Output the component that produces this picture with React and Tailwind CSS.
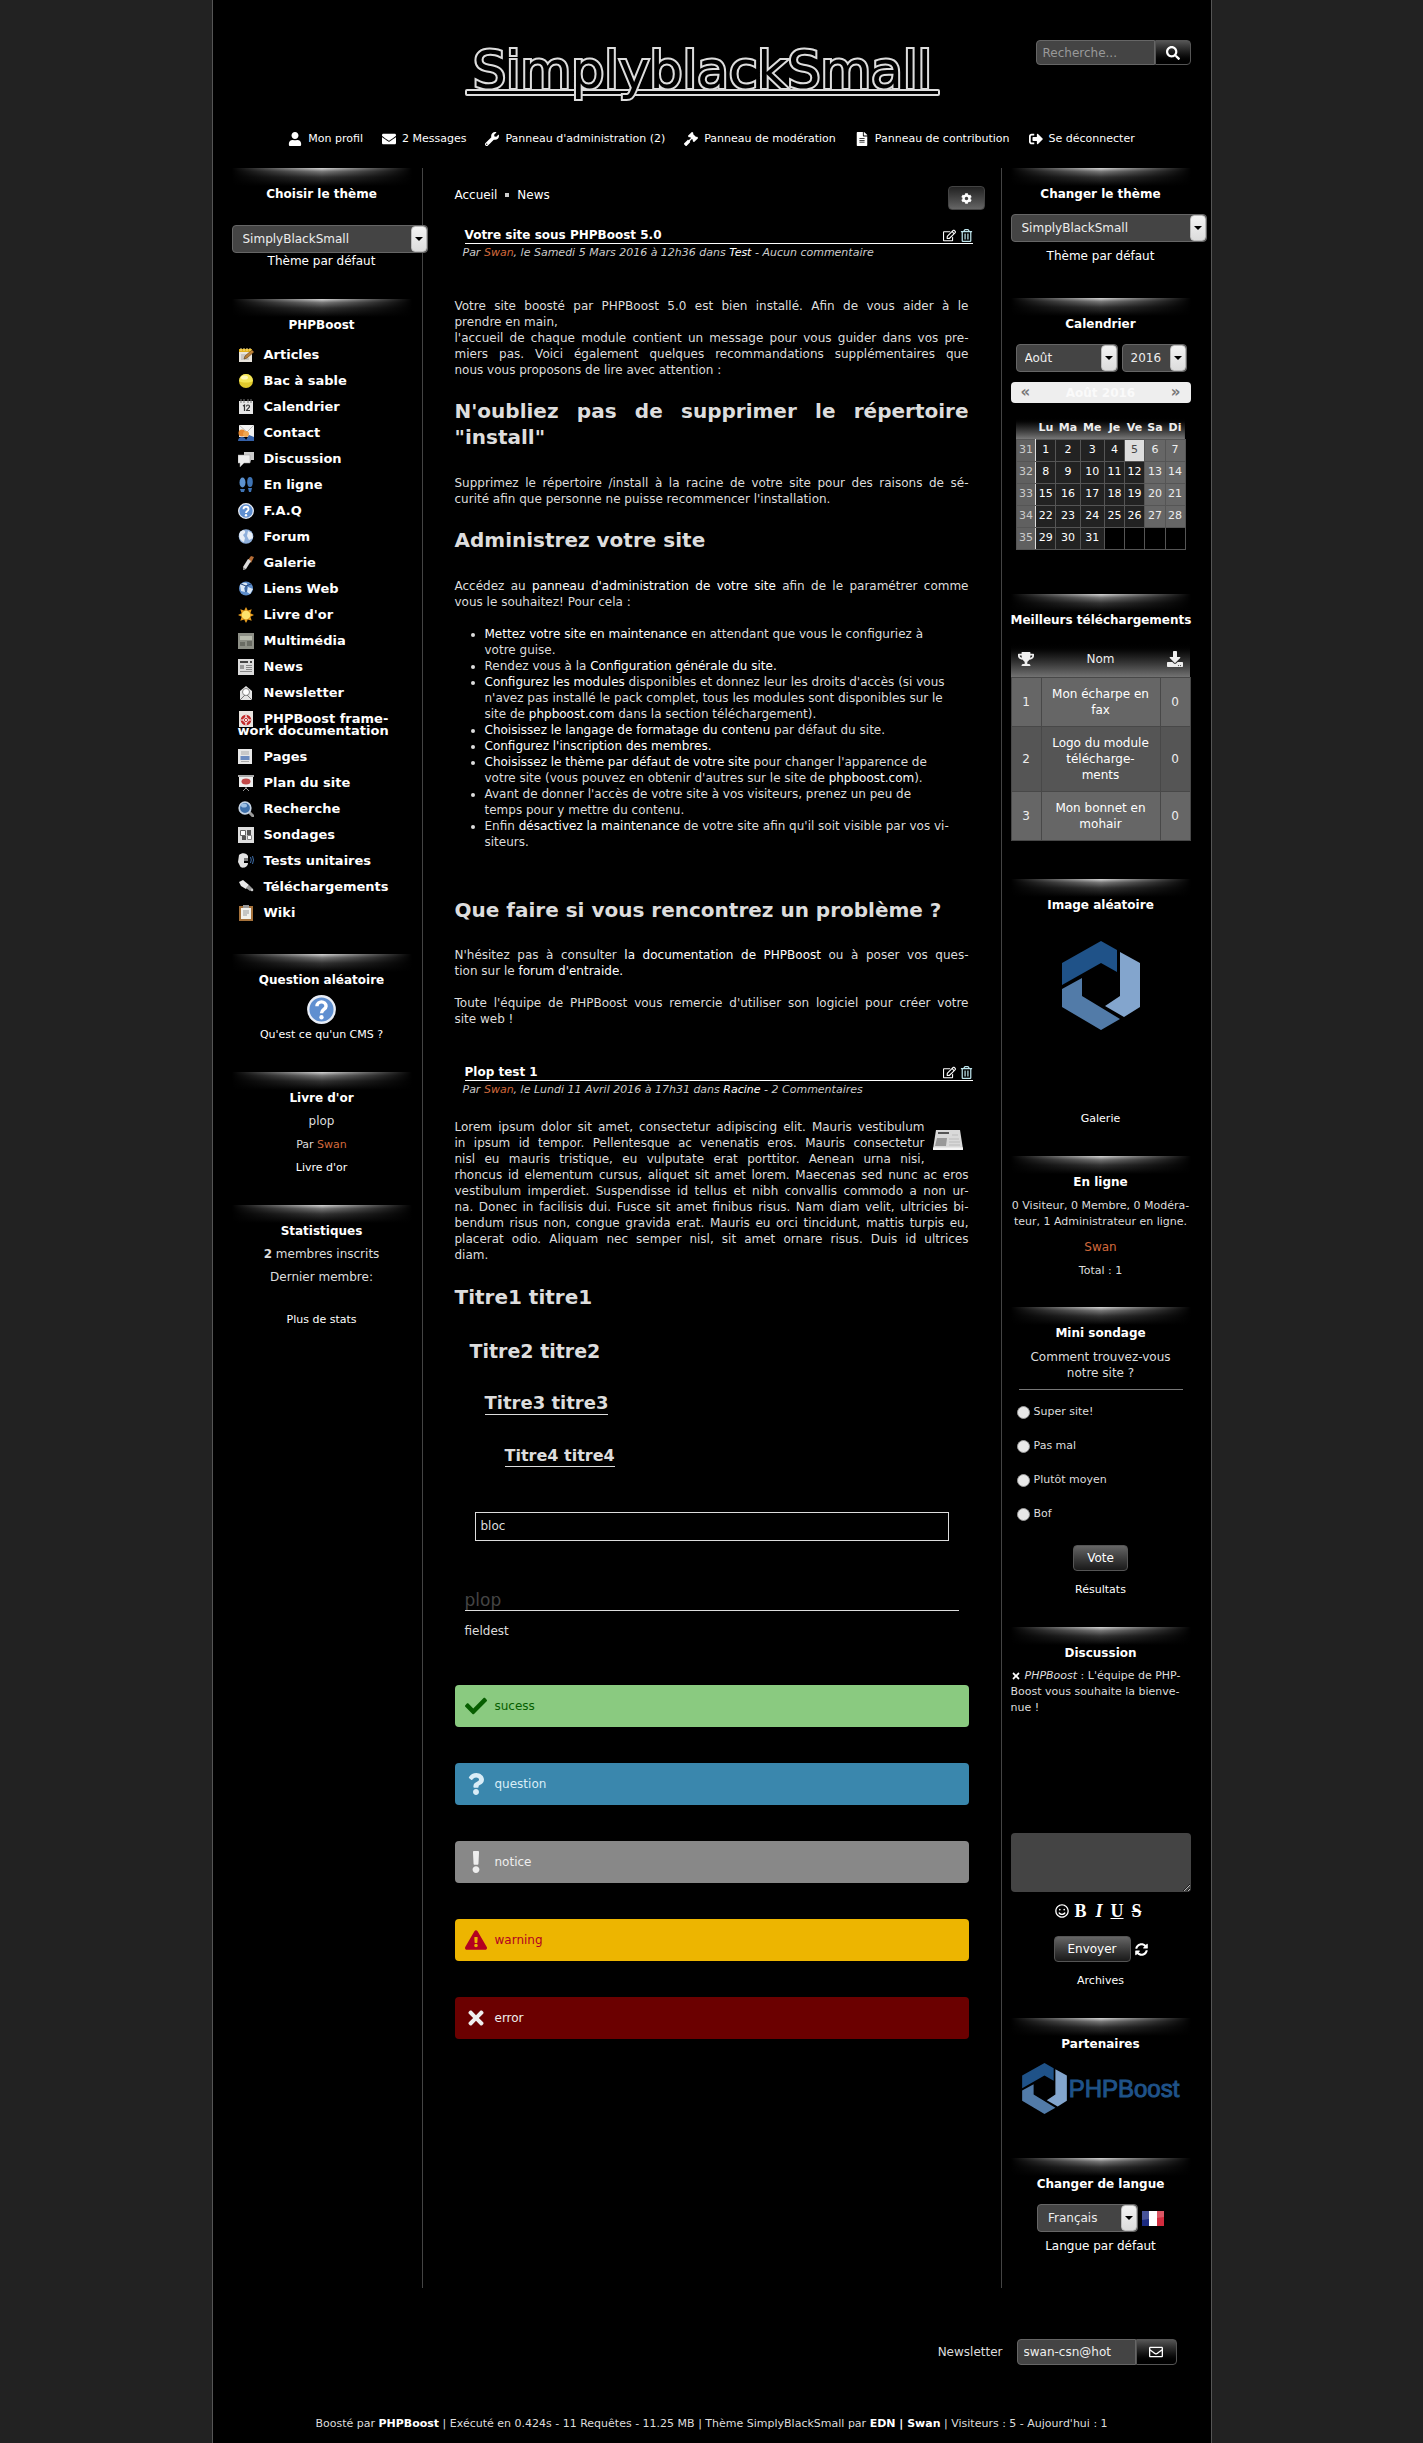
import React from "react";
import {
  FaUser, FaEnvelope, FaWrench, FaGavel, FaFileAlt, FaSignOutAlt, FaSearch, FaCog,
  FaRegEdit, FaRegTrashAlt, FaTrophy, FaDownload, FaCheck, FaQuestion, FaExclamation,
  FaExclamationTriangle, FaTimes, FaSyncAlt, FaRegSmile, FaRegEnvelope,
} from "react-icons/fa";

const A = ({ className = "text-white", children }) => (
  <a href="#" className={className}>{children}</a>
);

/* Justified paragraph whose line ends are chosen by the author. */
function Lines({ className = "", lines }) {
  return (
    <p className={className}>
      {lines.map((l, i) => (
        <span key={i} className={i < lines.length - 1 ? "block [text-align-last:justify]" : "block"}>{l}</span>
      ))}
    </p>
  );
}

/* ---------- sidebar block ---------- */
function Block({ title, className = "", children }) {
  return (
    <section className={"relative w-[180px] pt-[18px] " + className}>
      <div className="absolute inset-x-0 top-0 h-[18px] bg-[linear-gradient(to_right,#000,transparent_50%,#000),linear-gradient(to_bottom,#d8d8d8,#777_20%,#333_50%,#000)]" />
      <h2 className="relative text-center text-[12px] leading-4 font-bold text-white whitespace-nowrap">{title}</h2>
      {children}
    </section>
  );
}

function Select({ label, options, className, pad = "pl-2.5" }) {
  return (
    <span className={"relative inline-block h-7 " + className}>
      <select
        aria-label={label}
        className={"h-full w-full appearance-none rounded border border-[#666] bg-[#444] pr-4 text-[12px] text-[#eee] " + pad}
      >
        {options.map((o) => <option key={o}>{o}</option>)}
      </select>
      <span className="pointer-events-none absolute inset-y-px right-px flex w-4 items-center justify-center rounded-sm border border-[#bbb] bg-linear-to-b from-[#f4f4f4] to-[#dcdcdc]">
        <svg width="8" height="4" viewBox="0 0 8 4"><path d="M0 0h8L4 4z" fill="#000" /></svg>
      </span>
    </span>
  );
}

/* ---------- module icons ---------- */
const icons = {
  articles: (
    <g><path d="M1 2h13v13H1z" fill="#e8e4dc" /><path d="M1 2h13v3H1z" fill="#e3b21c" /><path d="M3 1v3M6 1v3M9 1v3M12 1v3" stroke="#fbe28a" /><path d="M3 8h6M3 10h5M3 12h8" stroke="#aaa" /><path d="M6 12l1-3 7-6 2 2-7 6z" fill="#b9803a" stroke="#5c3a12" strokeWidth=".6" /></g>
  ),
  sable: (
    <g><circle cx="8" cy="8" r="7" fill="#e0c92c" /><path d="M1 8a7 7 0 0 1 14 0c-3 2-11 2-14 0z" fill="#f3e658" /><ellipse cx="6.500" cy="4.500" rx="3.500" ry="2" fill="#fdf8b8" /></g>
  ),
  calendrier: (
    <g><path d="M1 2h14v13H1z" fill="#e6e6e6" /><path d="M3 0v4M6 0v4M10 0v4M13 0v4" stroke="#777" /><path d="M5 7l1.500-1v6M8.500 7.500c0-2 3-2 3 0 0 1.500-3 3-3 4h3.500" fill="none" stroke="#333" strokeWidth="1.200" /></g>
  ),
  contact: (
    <g><path d="M1 0h15v12H1z" fill="#f2f2f2" /><path d="M1 0l8 7 7-7" fill="none" stroke="#bbb" /><circle cx="4" cy="8" r="3.500" fill="#e6872e" /><circle cx="8" cy="9" r="3" fill="#f0a650" /><path d="M0 16c0-5 7-5 8-1l3-5 5 2v4z" fill="#3561a8" /></g>
  ),
  discussion: (
    <g><path d="M6 1h10v8h-3l-1 3V9H6z" fill="#ccc" /><path d="M0 4h12v8H6l-4 4v-4H0z" fill="#ededed" stroke="#999" strokeWidth=".5" /></g>
  ),
  ligne: (
    <g fill="#3f74b5"><ellipse cx="4.500" cy="5.500" rx="3" ry="5" fill="#5d92cf" /><path d="M2 12h5l-1 3H3z" /><ellipse cx="12" cy="5" rx="2.800" ry="5" /><path d="M10 11h4l-1 4h-2z" /></g>
  ),
  faq: (
    <g><circle cx="8" cy="8" r="7.300" fill="#5f8fd0" stroke="#e9eef7" strokeWidth="1.300" /><path d="M5.500 6.200c0-3.200 5-3.200 5 0C10.500 8 8 8 8 10" fill="none" stroke="#fff" strokeWidth="1.900" /><circle cx="8" cy="12.300" r="1.200" fill="#fff" /></g>
  ),
  forum: (
    <g><circle cx="8" cy="7.500" r="7.300" fill="#8fb0dc" /><path d="M2 3c3-3 6-2 5 1l-2 2 2 3-1 4C2 12 0 7 2 3zM10 2l4 2 1 5-4 2-2-4z" fill="#e8eef6" /></g>
  ),
  galerie: (
    <g><path d="M10 5l3-4 3 1-3 6z" fill="#b66d36" /><path d="M5 12l5-8 3 2-5 8-3 1z" fill="#ddd" /><path d="M5 12l3 2-3 1z" fill="#888" /></g>
  ),
  web: (
    <g><circle cx="8" cy="7.500" r="7" fill="#5c8cc9" /><path d="M2 4c3-3 8-3 7 0L6 7l1 4-4-1zM10 6l5 2-3 5-3-2z" fill="#dbe8f6" /><path d="M3 3l5 2 5-2M8 5v6" stroke="#1f4277" fill="none" /></g>
  ),
  livre: (
    <g><path d="M8 0l1.800 3.600L13.700 2.300l-1.300 3.900L16 8l-3.600 1.800 1.300 3.900-3.900-1.300L8 16l-1.800-3.600-3.900 1.300 1.300-3.900L0 8l3.600-1.800L2.300 2.300l3.900 1.300z" fill="#e89e1e" /><circle cx="8" cy="8" r="4.300" fill="#ffe36b" /></g>
  ),
  media: (
    <g><path d="M0 0h16v16H0z" fill="#8d8f86" /><path d="M2 3h12v4H2z" fill="#b9bcae" /><path d="M2 9h5v4H2zM9 8h5v5H9z" fill="#6a6c64" /></g>
  ),
  news: (
    <g><path d="M0 0h16v16H0z" fill="#dcdcdc" /><path d="M2 3h8M12 3h2" stroke="#444" strokeWidth="2" /><path d="M2 6h4v4H2z" fill="#999" /><path d="M8 6.500h6M8 8.500h6M8 10.500h6M2 12.500h12" stroke="#888" /></g>
  ),
  newsletter: (
    <g><path d="M2 6l6-5 6 5v9H2z" fill="#e4e4e4" /><circle cx="8" cy="7" r="3.500" fill="#fff" stroke="#888" /><path d="M2 15l5-5M14 15l-5-5" stroke="#777" /></g>
  ),
  doc: (
    <g><path d="M1 0h14v16H1z" fill="#e9e4e0" /><circle cx="8" cy="9" r="4" fill="none" stroke="#c22a2a" strokeWidth="2.600" /><path d="M8 4v10M3 9h10" stroke="#fff" strokeWidth="1.200" /><circle cx="8" cy="9" r="1.600" fill="#fff" stroke="#c22a2a" /></g>
  ),
  pages: (
    <g><path d="M0 0h14v15H0z" fill="#e8e8e8" /><path d="M3 3h8M3 5h8M3 12.500h8" stroke="#aaa" /><path d="M2.500 7h9v4h-9z" fill="#6d8cc0" /></g>
  ),
  plan: (
    <g><path d="M1 1h14v11H1z" fill="#eee" /><path d="M0 0h16v2H0z" fill="#aaa" /><ellipse cx="8" cy="6.500" rx="4.500" ry="3" fill="#c04848" /><path d="M8 12v2M5 16l3-3 3 3" stroke="#999" fill="none" /></g>
  ),
  recherche: (
    <g><path d="M10 10l5 5" stroke="#999" strokeWidth="3" strokeLinecap="round" /><circle cx="7" cy="7" r="5.800" fill="#3d6fa9" stroke="#c4d3e4" strokeWidth="1.700" /><ellipse cx="6" cy="4.500" rx="3" ry="2" fill="#9cc0e5" /></g>
  ),
  sondages: (
    <g><path d="M0 0h16v16H0z" fill="#dedede" /><path d="M2.500 3.500h5v5h-5z" fill="#fff" stroke="#666" /><path d="M9 3h4v5H9zM4 9h4v4H4z" fill="#555" /><path d="M9.500 8.500h4v4h-4z" fill="#fff" stroke="#888" /></g>
  ),
  tests: (
    <g><path d="M1 2C4-1 9 0 10 3v2H6v5h4c0 5-7 6-8 3L0 9z" fill="#e2e2e2" /><path d="M6 5h4v3H6z" fill="#777" /><path d="M12.500 4q1.500 3 0 6M14.500 3q2 4 0 8" stroke="#3f6ea8" fill="none" /></g>
  ),
  tele: (
    <g><path d="M1 3l4-2 6 5-3 4-5-3z" fill="#e9e9e9" /><path d="M8 9l3-3 4 4-3 2z" fill="#999" /><circle cx="14" cy="11" r="1.300" fill="#ccc" /></g>
  ),
  wiki: (
    <g><path d="M1 1h14v15H1z" fill="#a5713a" /><path d="M3 3h10v11H3z" fill="#f2f1ec" /><path d="M5 0h6v3H5z" fill="#999" /><path d="M5 6h6M5 8h6M5 10h4" stroke="#999" /></g>
  ),
};

const Ico = ({ name }) => (
  <svg viewBox="0 0 16 16" className="-mt-1.5 -mb-1 mr-2.5 inline-block size-4 align-middle" aria-hidden="true">{icons[name]}</svg>
);

const modules = [
  ["articles", "Articles"], ["sable", "Bac à sable"], ["calendrier", "Calendrier"], ["contact", "Contact"],
  ["discussion", "Discussion"], ["ligne", "En ligne"], ["faq", "F.A.Q"], ["forum", "Forum"], ["galerie", "Galerie"],
  ["web", "Liens Web"], ["livre", "Livre d'or"], ["media", "Multimédia"], ["news", "News"], ["newsletter", "Newsletter"],
  ["doc", <>PHPBoost frame-<br />work documentation</>], ["pages", "Pages"], ["plan", "Plan du site"],
  ["recherche", "Recherche"], ["sondages", "Sondages"], ["tests", "Tests unitaires"], ["tele", "Téléchargements"], ["wiki", "Wiki"],
];

function Hexagon({ className }) {
  return (
    <svg viewBox="0 0 78 89" className={className} aria-label="PHPBoost" role="img">
      <path d="M0 22L39 0l16 9v22l-16-9L0 44z" fill="#1f5288" />
      <path d="M58 11l20 11v44l-16 10-19-11 15-10z" fill="#83a5cd" />
      <path d="M0 48l20-11v18l38 23-19 11L0 66z" fill="#527ba8" />
    </svg>
  );
}

function Left() {
  return (
    <aside className="w-[210px] shrink-0 border-r border-[#444] pl-[19px]">
      <Block title="Choisir le thème" className="mb-[30px]">
        <Select label="Choisir le thème" options={["SimplyBlackSmall"]} className="mt-[23px] block w-[196px]" />
        <p className="text-center text-[12px] leading-4"><A>Thème par défaut</A></p>
      </Block>
      <Block title="PHPBoost" className="mb-7">
        <nav className="mt-[9px]">
          <ul className="pl-1.5 text-[13px] font-bold whitespace-nowrap">
            {modules.map(([k, t]) => (
              <li key={k} className={k === "doc" ? "py-[7px] leading-3" : "py-[5px] leading-4"}><A><Ico name={k} />{t}</A></li>
            ))}
          </ul>
        </nav>
      </Block>
      <Block title="Question aléatoire" className="mb-[29px] text-center">
        <svg viewBox="0 0 16 16" className="mx-auto mt-[7px] size-[29px]" aria-hidden="true">{icons.faq}</svg>
        <p className="mt-[3px] text-[11px] leading-4"><A>Qu'est ce qu'un CMS ?</A></p>
      </Block>
      <Block title="Livre d'or" className="mb-[26px] text-center text-[11px] leading-[23px]">
        <p className="mt-1 text-[12px]">plop</p>
        <p>Par <A className="text-[#d2693c]">Swan</A></p>
        <p><A>Livre d'or</A></p>
      </Block>
      <Block title="Statistiques" className="text-center text-[12px] leading-[23px]">
        <p className="mt-1"><b>2</b> membres inscrits</p>
        <p>Dernier membre:</p>
        <p className="mt-[19px] text-[11px]"><A>Plus de stats</A></p>
      </Block>
    </aside>
  );
}

const weeks = [
  [31, 1, 2, 3, 4, 5, 6, 7], [32, 8, 9, 10, 11, 12, 13, 14], [33, 15, 16, 17, 18, 19, 20, 21],
  [34, 22, 23, 24, 25, 26, 27, 28], [35, 29, 30, 31, "", "", "", ""],
];
function dayClass(d, i) {
  if (i === 0) return "border-[#555] border-r-[#ddd] bg-[#606060] text-[#ccc]";
  if (d === 5) return "border-[#555] bg-[#ddd] text-[#444]";
  if (d === "") return "border-[#555] bg-black";
  if (i > 5) return "border-[#555] bg-[#666] text-[#eee]";
  return "border-[#555] bg-[#222] text-white";
}

const downloads = [
  ["1", <>Mon écharpe en fax</>],
  ["2", <>Logo du module<br />télécharge-<br />ments</>],
  ["3", <>Mon bonnet en mohair</>],
];
const btn = "rounded border border-[#555] bg-linear-to-b from-[#666] to-[#1a1a1a] text-[12px] text-white";

function Right() {
  return (
    <aside className="w-[210px] shrink-0 border-l border-[#444] pb-[34px] pl-[9px]">
      <Block title="Changer le thème" className="mb-[34px]">
        <Select label="Changer le thème" options={["SimplyBlackSmall"]} className="mt-3 block w-[196px]" />
        <p className="mt-1.5 text-center text-[12px] leading-4"><A>Thème par défaut</A></p>
      </Block>
      <Block title="Calendrier" className="mb-11">
        <div className="mt-3 flex gap-1 pl-[5px]">
          <Select label="Mois" options={["Août"]} className="w-[102px]" pad="pl-2" />
          <Select label="Année" options={["2016"]} className="w-[65px]" pad="pl-2" />
        </div>
        <div className="mt-2.5 flex h-[21px] items-center justify-between rounded-sm bg-[#eee] px-2.5 text-[12px] font-bold text-[#fafafa]">
          <a href="#" className="text-[15px] text-[#777]">«</a>
          <span>Août 2016</span>
          <a href="#" className="text-[15px] text-[#777]">»</a>
        </div>
        <table className="mx-auto mt-3.5 w-[170px] border-collapse text-center text-[11px]">
          <thead className="bg-linear-to-b from-black to-[#777]">
            <tr className="h-[22px] font-bold text-[#eee]">
              <th aria-label="Semaine" />
              {["Lu", "Ma", "Me", "Je", "Ve", "Sa", "Di"].map((d) => <th key={d}>{d}</th>)}
            </tr>
          </thead>
          <tbody>
            {weeks.map((w) => (
              <tr key={w[0]} className="h-[22px]">
                {w.map((d, i) => <td key={i} className={"border " + dayClass(d, i)}>{d}</td>)}
              </tr>
            ))}
          </tbody>
        </table>
      </Block>
      <Block title="Meilleurs téléchargements" className="mb-[38px]">
        <table className="mt-3.5 w-full table-fixed border-collapse text-center text-[12px] leading-4 text-[#eee]">
          <thead className="bg-linear-to-b from-black to-[#777]">
            <tr className="h-9">
              <th className="w-[30px]" aria-label="Position"><FaTrophy className="mx-auto size-4" /></th>
              <th className="font-normal">Nom</th>
              <th className="w-[30px]" aria-label="Téléchargements"><FaDownload className="mx-auto size-4" /></th>
            </tr>
          </thead>
          <tbody>
            {downloads.map(([n, t], i) => (
              <tr key={n} className={i === 1 ? "bg-[#555]" : "bg-[#666]"}>
                <td className="border border-[#484848]">{n}</td>
                <td className="border border-[#484848] px-2 py-2"><A>{t}</A></td>
                <td className="border border-[#484848]">0</td>
              </tr>
            ))}
          </tbody>
        </table>
      </Block>
      <Block title="Image aléatoire" className="mb-[29px] text-center">
        <Hexagon className="mx-auto mt-7 h-[89px] w-[78px]" />
        <p className="mt-[81px] text-[11px] leading-4"><A>Galerie</A></p>
      </Block>
      <Block title="En ligne" className="mb-7 text-center text-[11px] leading-4">
        <p className="-mx-2 mt-2">0 Visiteur, 0 Membre, 0 Modéra-<br />teur, 1 Administrateur en ligne.</p>
        <p className="mt-[9px] text-[12px]"><A className="text-[#d2693c]">Swan</A></p>
        <p className="mt-2">Total : 1</p>
      </Block>
      <Block title="Mini sondage" className="mb-[29px] text-center">
        <p className="mt-2 px-2 text-[12px] leading-4">Comment trouvez-vous notre site ?</p>
        <hr className="mx-2 mt-2 border-[#777]" />
        <div className="mt-[5px] pl-1.5">
          {["Super site!", "Pas mal", "Plutôt moyen", "Bof"].map((t) => (
            <label key={t} className="flex h-[34px] items-center gap-1 text-[11px]">
              <input type="radio" name="poll" className="size-[13px] appearance-none rounded-full border border-[#999] bg-[#e8e8e8]" />
              {t}
            </label>
          ))}
        </div>
        <button type="button" className={"mt-3.5 block h-[26px] w-[55px] mx-auto " + btn}>Vote</button>
        <p className="mt-[11px] text-[11px] leading-4"><A>Résultats</A></p>
      </Block>
      <Block title="Discussion" className="mb-[29px] text-center">
        <p className="mt-[7px] text-left text-[11px] leading-4">
          <button type="button" aria-label="Supprimer" className="mr-1 align-middle text-white"><FaTimes className="size-2.5" /></button>
          <i>PHPBoost</i> : L'équipe de PHP-<br />Boost vous souhaite la bienve-<br />nue !
        </p>
        <textarea aria-label="Message" className="mt-[117px] block h-[59px] w-full rounded bg-[#444] text-[12px] text-[#eee]" />
        <div className="mt-[11px] flex h-4 items-center justify-center gap-1 font-['Liberation_Serif',serif] text-[18px] leading-4 font-bold text-white">
          <button type="button" aria-label="Smileys"><FaRegSmile className="size-3.5" /></button>
          <button type="button" className="px-px">B</button>
          <button type="button" className="px-1 italic">I</button>
          <button type="button" className="underline">U</button>
          <button type="button" className="px-1"><s>S</s></button>
        </div>
        <div className="mt-[17px] flex items-center justify-center gap-1">
          <button type="button" className={"h-[26px] w-[77px] " + btn}>Envoyer</button>
          <button type="button" aria-label="Actualiser" className="text-white"><FaSyncAlt className="size-[13px]" /></button>
        </div>
        <p className="mt-[11px] text-[11px] leading-4"><A>Archives</A></p>
      </Block>
      <Block title="Partenaires" className="mb-11">
        <a href="#" className="mt-[11px] flex h-[51px] items-center justify-center gap-0.5 font-['Liberation_Sans',sans-serif] text-[24px] text-[#1f5288] [-webkit-text-stroke:1px_#1f5288]">
          <Hexagon className="h-[51px] w-[45px]" />PHPBoost
        </a>
      </Block>
      <Block title="Changer de langue">
        <div className="mt-3 flex items-center justify-center gap-1">
          <Select label="Langue" options={["Français"]} className="w-[101px]" />
          <svg viewBox="0 0 22 15" className="h-[15px] w-[22px]" role="img" aria-label="Français">
            <path d="M0 0h7v15H0z" fill="#1b2a80" /><path d="M7 0h8v15H7z" fill="#fff" /><path d="M15 0h7v15h-7z" fill="#d22c3e" />
            <path d="M0 0h22v6L0 9z" fill="#fff" opacity=".2" />
          </svg>
        </div>
        <p className="mt-1.5 text-center text-[12px] leading-4"><A>Langue par défaut</A></p>
      </Block>
    </aside>
  );
}

function ArticleHead({ title, children }) {
  return (
    <header>
      <div className="-mr-1 ml-2.5 flex h-[17px] items-end justify-between border-b border-white">
        <h2 className="text-[12px] leading-4 font-bold text-white">{title}</h2>
        <span className="flex gap-1 pb-px text-white">
          <button type="button" aria-label="Modifier"><FaRegEdit className="size-[13px]" /></button>
          <button type="button" aria-label="Supprimer" className="text-[#bfe6ee]"><FaRegTrashAlt className="size-[13px]" /></button>
        </span>
      </div>
      <p className="ml-2 text-[11px] leading-[18px] text-[#ccc] italic">{children}</p>
    </header>
  );
}

const messages = [
  ["sucess", "bg-[#8aca80] text-[#075e00]", FaCheck],
  ["question", "bg-[#3a87ad] text-[#d9edf7]", FaQuestion],
  ["notice", "bg-[#888] text-[#eee]", FaExclamation],
  ["warning", "bg-[#edb500] text-[#b30020]", FaExclamationTriangle],
  ["error", "bg-[#6b0000] text-[#eee]", FaTimes],
];

function Main() {
  return (
    <main className="min-w-0 flex-1 pt-[18px] pr-4 pl-8">
      <div className="flex items-start justify-between">
        <p className="flex items-center gap-2 text-[12px] leading-[18px]">
          <A>Accueil</A><span className="size-1 bg-[#ccc]" /><A>News</A>
        </p>
        <button type="button" aria-label="Options" className="flex h-6 w-[37px] items-center justify-center rounded border border-[#444] bg-linear-to-b from-[#222] to-[#666] text-white"><FaCog className="size-[11px]" /></button>
      </div>
      <div className="mt-[17px] mr-4 text-justify text-[12px] leading-4 text-[#ddd]">
        <article>
          <ArticleHead title="Votre site sous PHPBoost 5.0">
            Par <A className="text-[#d2693c]">Swan</A>, le Samedi 5 Mars 2016 à 12h36 dans <A>Test</A> - Aucun commentaire
          </ArticleHead>
          <Lines className="mt-9" lines={[
            "Votre site boosté par PHPBoost 5.0 est bien installé. Afin de vous aider à le",
            "prendre en main,",
          ]} />
          <Lines lines={[
            "l'accueil de chaque module contient un message pour vous guider dans vos pre-",
            "miers pas. Voici également quelques recommandations supplémentaires que",
            "nous vous proposons de lire avec attention :",
          ]} />
          <h3 className="mt-5 text-[20px] leading-[26px] font-bold">N'oubliez pas de supprimer le répertoire "install"</h3>
          <Lines className="mt-[25px]" lines={[
            "Supprimez le répertoire /install à la racine de votre site pour des raisons de sé-",
            "curité afin que personne ne puisse recommencer l'installation.",
          ]} />
          <h3 className="mt-5 text-[20px] leading-[26px] font-bold">Administrez votre site</h3>
          <Lines className="mt-[25px]" lines={[
            <>Accédez au <A>panneau d'administration de votre site</A> afin de le paramétrer comme</>,
            "vous le souhaitez! Pour cela :",
          ]} />
          <ul className="mt-4 list-disc pl-[30px] text-left">
            <li><A>Mettez votre site en maintenance</A> en attendant que vous le configuriez à<br />votre guise.</li>
            <li>Rendez vous à la <A>Configuration générale du site.</A></li>
            <li><A>Configurez les modules</A> disponibles et donnez leur les droits d'accès (si vous<br />n'avez pas installé le pack complet, tous les modules sont disponibles sur le<br />site de <A>phpboost.com</A> dans la section téléchargement).</li>
            <li><A>Choisissez le langage de formatage du contenu</A> par défaut du site.</li>
            <li><A>Configurez l'inscription des membres.</A></li>
            <li><A>Choisissez le thème par défaut de votre site</A> pour changer l'apparence de<br />votre site (vous pouvez en obtenir d'autres sur le site de <A>phpboost.com</A>).</li>
            <li>Avant de donner l'accès de votre site à vos visiteurs, prenez un peu de<br />temps pour y mettre du contenu.</li>
            <li>Enfin <A>désactivez la maintenance</A> de votre site afin qu'il soit visible par vos vi-<br />siteurs.</li>
          </ul>
          <h3 className="mt-[47px] text-[20px] leading-[26px] font-bold">Que faire si vous rencontrez un problème ?</h3>
          <Lines className="mt-6" lines={[
            <>N'hésitez pas à consulter <A>la documentation de PHPBoost</A> ou à poser vos ques-</>,
            <>tion sur le <A>forum d'entraide.</A></>,
          ]} />
          <Lines className="mt-4" lines={[
            "Toute l'équipe de PHPBoost vous remercie d'utiliser son logiciel pour créer votre",
            "site web !",
          ]} />
        </article>
        <article className="mt-[37px]">
          <ArticleHead title="Plop test 1">
            Par <A className="text-[#d2693c]">Swan</A>, le Lundi 11 Avril 2016 à 17h31 dans <A>Racine</A> - 2 Commentaires
          </ArticleHead>
          <div className="mt-5">
            <svg viewBox="0 0 30 20" className="mt-[11px] mr-1.5 mb-3.5 ml-2 float-right h-5 w-[30px]" aria-hidden="true">
              <path d="M3 0h24l3 19H0z" fill="#d9d9d9" /><path d="M0 17.500h30V20H0z" fill="#f5f5f5" />
              <path d="M5 3h11" stroke="#555" strokeWidth="2" /><path d="M4 8h10l-1 8H2z" fill="#999" />
              <path d="M16 9h10M16 12h11M16 15h11M19 5h6" stroke="#bbb" />
            </svg>
            <Lines lines={[
              "Lorem ipsum dolor sit amet, consectetur adipiscing elit. Mauris vestibulum",
              "in ipsum id tempor. Pellentesque ac venenatis eros. Mauris consectetur",
              "nisl eu mauris tristique, eu vulputate erat porttitor. Aenean urna nisi,",
              "rhoncus id elementum cursus, aliquet sit amet lorem. Maecenas sed nunc ac eros",
              "vestibulum imperdiet. Suspendisse id tellus et nibh convallis commodo a non ur-",
              "na. Donec in facilisis dui. Fusce sit amet finibus risus. Nam diam velit, ultricies bi-",
              "bendum risus non, congue gravida erat. Mauris eu orci tincidunt, mattis turpis eu,",
              "placerat odio. Aliquam nec semper nisl, sit amet ornare risus. Duis id ultrices",
              "diam.",
            ]} />
          </div>
          <h3 className="mt-[21px] text-[20px] leading-[26px] font-bold">Titre1 titre1</h3>
          <h4 className="mt-7 ml-[15px] text-[19px] leading-[26px] font-bold">Titre2 titre2</h4>
          <h5 className="mt-7 ml-[30px] w-fit border-b border-[#ddd] text-[18px] leading-[22px] font-bold">Titre3 titre3</h5>
          <h6 className="mt-[31px] ml-[50px] w-fit border-b border-[#ddd] text-[16px] leading-5 font-bold">Titre4 titre4</h6>
          <div className="mx-5 mt-[45px] h-[29px] border border-[#ddd] px-[5px] leading-[27px]">bloc</div>
          <fieldset className="mx-2.5 mt-[49px]">
            <legend className="w-full border-b border-[#ddd] text-[17px] leading-5 text-[#444]">plop</legend>
            <p className="mt-3">fieldest</p>
          </fieldset>
          <div className="mt-[46px] flex flex-col gap-9">
            {messages.map(([t, c, I]) => (
              <div key={t} className={"flex h-[42px] items-center gap-2 rounded pl-2.5 " + c}>
                <I className="size-[22px]" />{t}
              </div>
            ))}
          </div>
        </article>
      </div>
    </main>
  );
}

const userMenu = [
  [FaUser, "Mon profil"], [FaEnvelope, "2 Messages"], [FaWrench, "Panneau d'administration (2)"],
  [FaGavel, "Panneau de modération"], [FaFileAlt, "Panneau de contribution"], [FaSignOutAlt, "Se déconnecter"],
];

export default function App() {
  return (
    <div lang="fr" className="bg-[#222] font-['DejaVu_Sans',Verdana,sans-serif] text-[#ddd]">
      <div className="mx-auto max-w-[1000px] border-x border-[#555] bg-black">
        <header className="relative flex h-[168px] flex-col items-center">
          <h1 className="relative mt-10 mr-[18px] h-[90px] w-[475px] text-center">
            <span className="absolute inset-x-0 top-[49px] h-[7px] rounded-xs border-2 border-[#ddd]" />
            <a href="#" className="relative text-[52px] leading-[60px] text-black [-webkit-text-stroke:4px_#ddd] [paint-order:stroke]">SimplyblackSmall</a>
          </h1>
          <form className="absolute top-10 right-5 flex h-[25px] w-[155px]" onSubmit={(e) => e.preventDefault()}>
            <input type="search" aria-label="Recherche" placeholder="Recherche..." className="min-w-0 flex-1 rounded-l border border-[#666] bg-[#444] px-1.5 text-[12px] text-[#eee] placeholder:text-[#999]" />
            <button type="submit" aria-label="Rechercher" className="flex w-9 items-center justify-center rounded-r border border-[#555] bg-linear-to-b from-[#555] to-black text-white"><FaSearch className="size-3.5" /></button>
          </form>
          <nav className="flex gap-[19px] text-[11px] leading-[18px]">
            {userMenu.map(([I, t]) => (
              <a key={t} href="#" className="flex items-center gap-1.5 whitespace-nowrap text-white"><I className="size-3.5" />{t}</a>
            ))}
          </nav>
        </header>
        <div className="flex">
          <Left />
          <Main />
          <Right />
        </div>
        <footer className="pt-[51px] pb-3">
          <form className="mr-[34px] flex items-center justify-end" onSubmit={(e) => e.preventDefault()}>
            <label htmlFor="nl" className="mr-3.5 text-[12px]">Newsletter</label>
            <input id="nl" type="text" defaultValue="swan-csn@hot" className="h-[26px] w-[119px] rounded-l border border-[#666] bg-[#444] px-1.5 text-[12px] text-[#eee]" />
            <button type="submit" aria-label="S'abonner" className="flex h-[26px] w-[41px] items-center justify-center rounded-r border border-[#555] bg-linear-to-b from-[#555] to-black text-white"><FaRegEnvelope className="size-3.5" /></button>
          </form>
          <p className="mt-[51px] text-center text-[11px] leading-4">Boosté par <b className="text-white">PHPBoost</b> | Exécuté en 0.424s - 11 Requêtes - 11.25 MB | Thème SimplyBlackSmall par <b className="text-white">EDN | Swan</b> | Visiteurs : 5 - Aujourd'hui : 1</p>
        </footer>
      </div>
    </div>
  );
}
